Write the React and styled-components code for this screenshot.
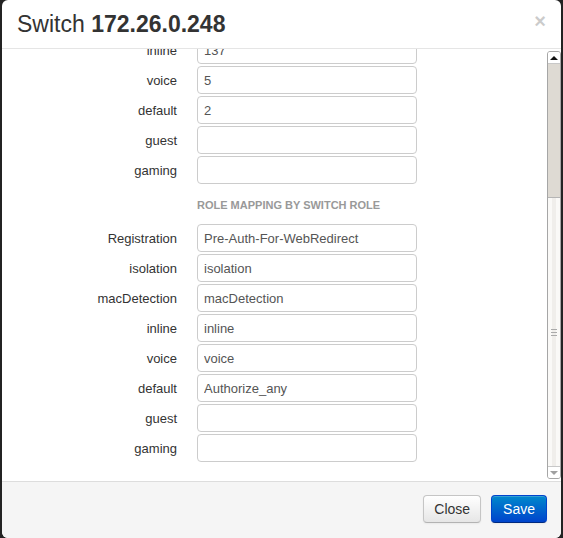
import React, { useLayoutEffect, useRef } from "react";
import styled, { createGlobalStyle } from "styled-components";

const GlobalStyle = createGlobalStyle`
  html, body {
    margin: 0;
    padding: 0;
    background: #232323;
    overflow: hidden;
  }
  body {
    font-family: "Liberation Sans", Helvetica, Arial, sans-serif;
  }
`;

const Backdrop = styled.div`
  height: 538px;
  padding: 0 2px;
  display: flex;
`;

const Modal = styled.div`
  width: 559px;
  height: 538px;
  background: #fff;
  border-radius: 6px;
  display: flex;
  flex-direction: column;
  overflow: hidden;
`;

const Header = styled.div`
  box-sizing: border-box;
  height: 49px;
  padding: 0 15px;
  border-bottom: 1px solid #e5e5e5;
  display: flex;
  align-items: center;
  justify-content: space-between;
`;

const Title = styled.h3`
  margin: 0;
  font-size: 23px;
  line-height: 27px;
  font-weight: normal;
  color: #333;
  padding-top: 1px;

  b {
    font-weight: bold;
  }
`;

const CloseX = styled.span`
  font-size: 20px;
  font-weight: bold;
  line-height: 20px;
  color: #000;
  opacity: 0.2;
  margin-top: -6px;
`;

const Body = styled.div`
  flex: 1;
  min-height: 0;
  display: flex;
`;

const Scroller = styled.div`
  flex: 1;
  overflow: hidden;
  padding: 15px 15px 17px;
`;

const Row = styled.div`
  display: flex;
  align-items: center;
  margin-bottom: 2px;
`;

const Label = styled.label`
  width: 160px;
  margin-right: 20px;
  text-align: right;
  font-size: 13px;
  color: #333;
`;

const Input = styled.input`
  box-sizing: border-box;
  width: 220px;
  height: 28px;
  padding: 0 6px;
  border: 1px solid #ccc;
  border-radius: 4px;
  font-family: inherit;
  font-size: 13px;
  color: #555;
  background: #fff;
  outline: none;
`;

const Heading = styled.div`
  margin-left: 180px;
  padding: 10px 0;
  line-height: 18px;
  font-size: 11px;
  font-weight: bold;
  color: #999;
  text-transform: uppercase;
`;

const Rail = styled.div`
  box-sizing: border-box;
  width: 14px;
  margin: 2px 0;
  border: 1px solid #a6a6a6;
  border-radius: 3px;
  background: #f8f7f5;
  display: flex;
  flex-direction: column;
  overflow: hidden;
`;

const RailButton = styled.div`
  height: 11px;
  flex: none;
  background: #fff;
  display: flex;
  align-items: center;
  justify-content: center;
  border-${({ $down }) => ($down ? "top" : "bottom")}: 1px solid #c8c8c8;
`;

const Arrow = styled.span`
  width: 0;
  height: 0;
  border-left: 4px solid transparent;
  border-right: 4px solid transparent;
  ${({ $down }) =>
    $down
      ? "border-top: 4px solid #a0a0a0;"
      : "border-bottom: 4px solid #111;"}
`;

const Trough = styled.div`
  height: 133px;
  flex: none;
  background: #dedad3;
`;

const Thumb = styled.div`
  flex: 1;
  border-top: 1px solid #b5b5b5;
  background: linear-gradient(
    to right,
    #faf9f7 0,
    #faf9f7 35%,
    #f0eeeb 35%,
    #f0eeeb 65%,
    #faf9f7 65%
  );
  display: flex;
  align-items: center;
  justify-content: center;
`;

const Grip = styled.span`
  width: 6px;
  height: 5px;
  border-top: 1px solid #aaa;
  border-bottom: 1px solid #aaa;
  position: relative;

  &::after {
    content: "";
    position: absolute;
    left: 0;
    right: 0;
    top: 2px;
    border-top: 1px solid #aaa;
  }
`;

const Footer = styled.div`
  box-sizing: border-box;
  height: 57px;
  padding: 13px 14px 15px;
  border-top: 1px solid #ddd;
  background: #f5f5f5;
  display: flex;
  justify-content: flex-end;
  align-items: flex-start;
  gap: 10px;
`;

const Button = styled.button`
  box-sizing: border-box;
  height: 28px;
  padding: 0 ${({ $primary }) => ($primary ? "11px" : "10px")};
  border-radius: 4px;
  font-family: inherit;
  font-size: 14px;
  line-height: 18px;
  cursor: pointer;
  border: 1px solid ${({ $primary }) => ($primary ? "#0044cc" : "#c5c5c5")};
  border-bottom-color: ${({ $primary }) => ($primary ? "#002a80" : "#b3b3b3")};
  color: ${({ $primary }) => ($primary ? "#fff" : "#333")};
  background: ${({ $primary }) =>
    $primary
      ? "linear-gradient(to bottom, #0088cc, #0044cc)"
      : "linear-gradient(to bottom, #ffffff, #e6e6e6)"};
  box-shadow: inset 0 1px 0 rgba(255, 255, 255, 0.2), 0 1px 2px rgba(0, 0, 0, 0.05);
`;

const roles = ["Registration", "isolation", "macDetection", "inline", "voice", "default", "guest", "gaming"];

const vlanValues = ["2", "3", "4", "137", "5", "2", "", ""];
const roleValues = ["Pre-Auth-For-WebRedirect", "isolation", "macDetection", "inline", "voice", "Authorize_any", "", ""];

const Section = ({ title, values }) => (
  <>
    <Heading>{title}</Heading>
    {roles.map((role, i) => (
      <Row key={role}>
        <Label>{role}</Label>
        <Input defaultValue={values[i]} />
      </Row>
    ))}
  </>
);

const App = () => {
  const scrollRef = useRef(null);

  useLayoutEffect(() => {
    const el = scrollRef.current;
    if (el) el.scrollTop = el.scrollHeight - el.clientHeight;
  }, []);

  return (
    <>
      <GlobalStyle />
      <Backdrop>
        <Modal>
          <Header>
            <Title>
              Switch <b>172.26.0.248</b>
            </Title>
            <CloseX>×</CloseX>
          </Header>
          <Body>
            <Scroller ref={scrollRef}>
              <Section title="Role mapping by VLAN ID" values={vlanValues} />
              <Section title="Role mapping by switch role" values={roleValues} />
            </Scroller>
            <Rail>
              <RailButton>
                <Arrow />
              </RailButton>
              <Trough />
              <Thumb>
                <Grip />
              </Thumb>
              <RailButton $down>
                <Arrow $down />
              </RailButton>
            </Rail>
          </Body>
          <Footer>
            <Button>Close</Button>
            <Button $primary>Save</Button>
          </Footer>
        </Modal>
      </Backdrop>
    </>
  );
};

export default App;
